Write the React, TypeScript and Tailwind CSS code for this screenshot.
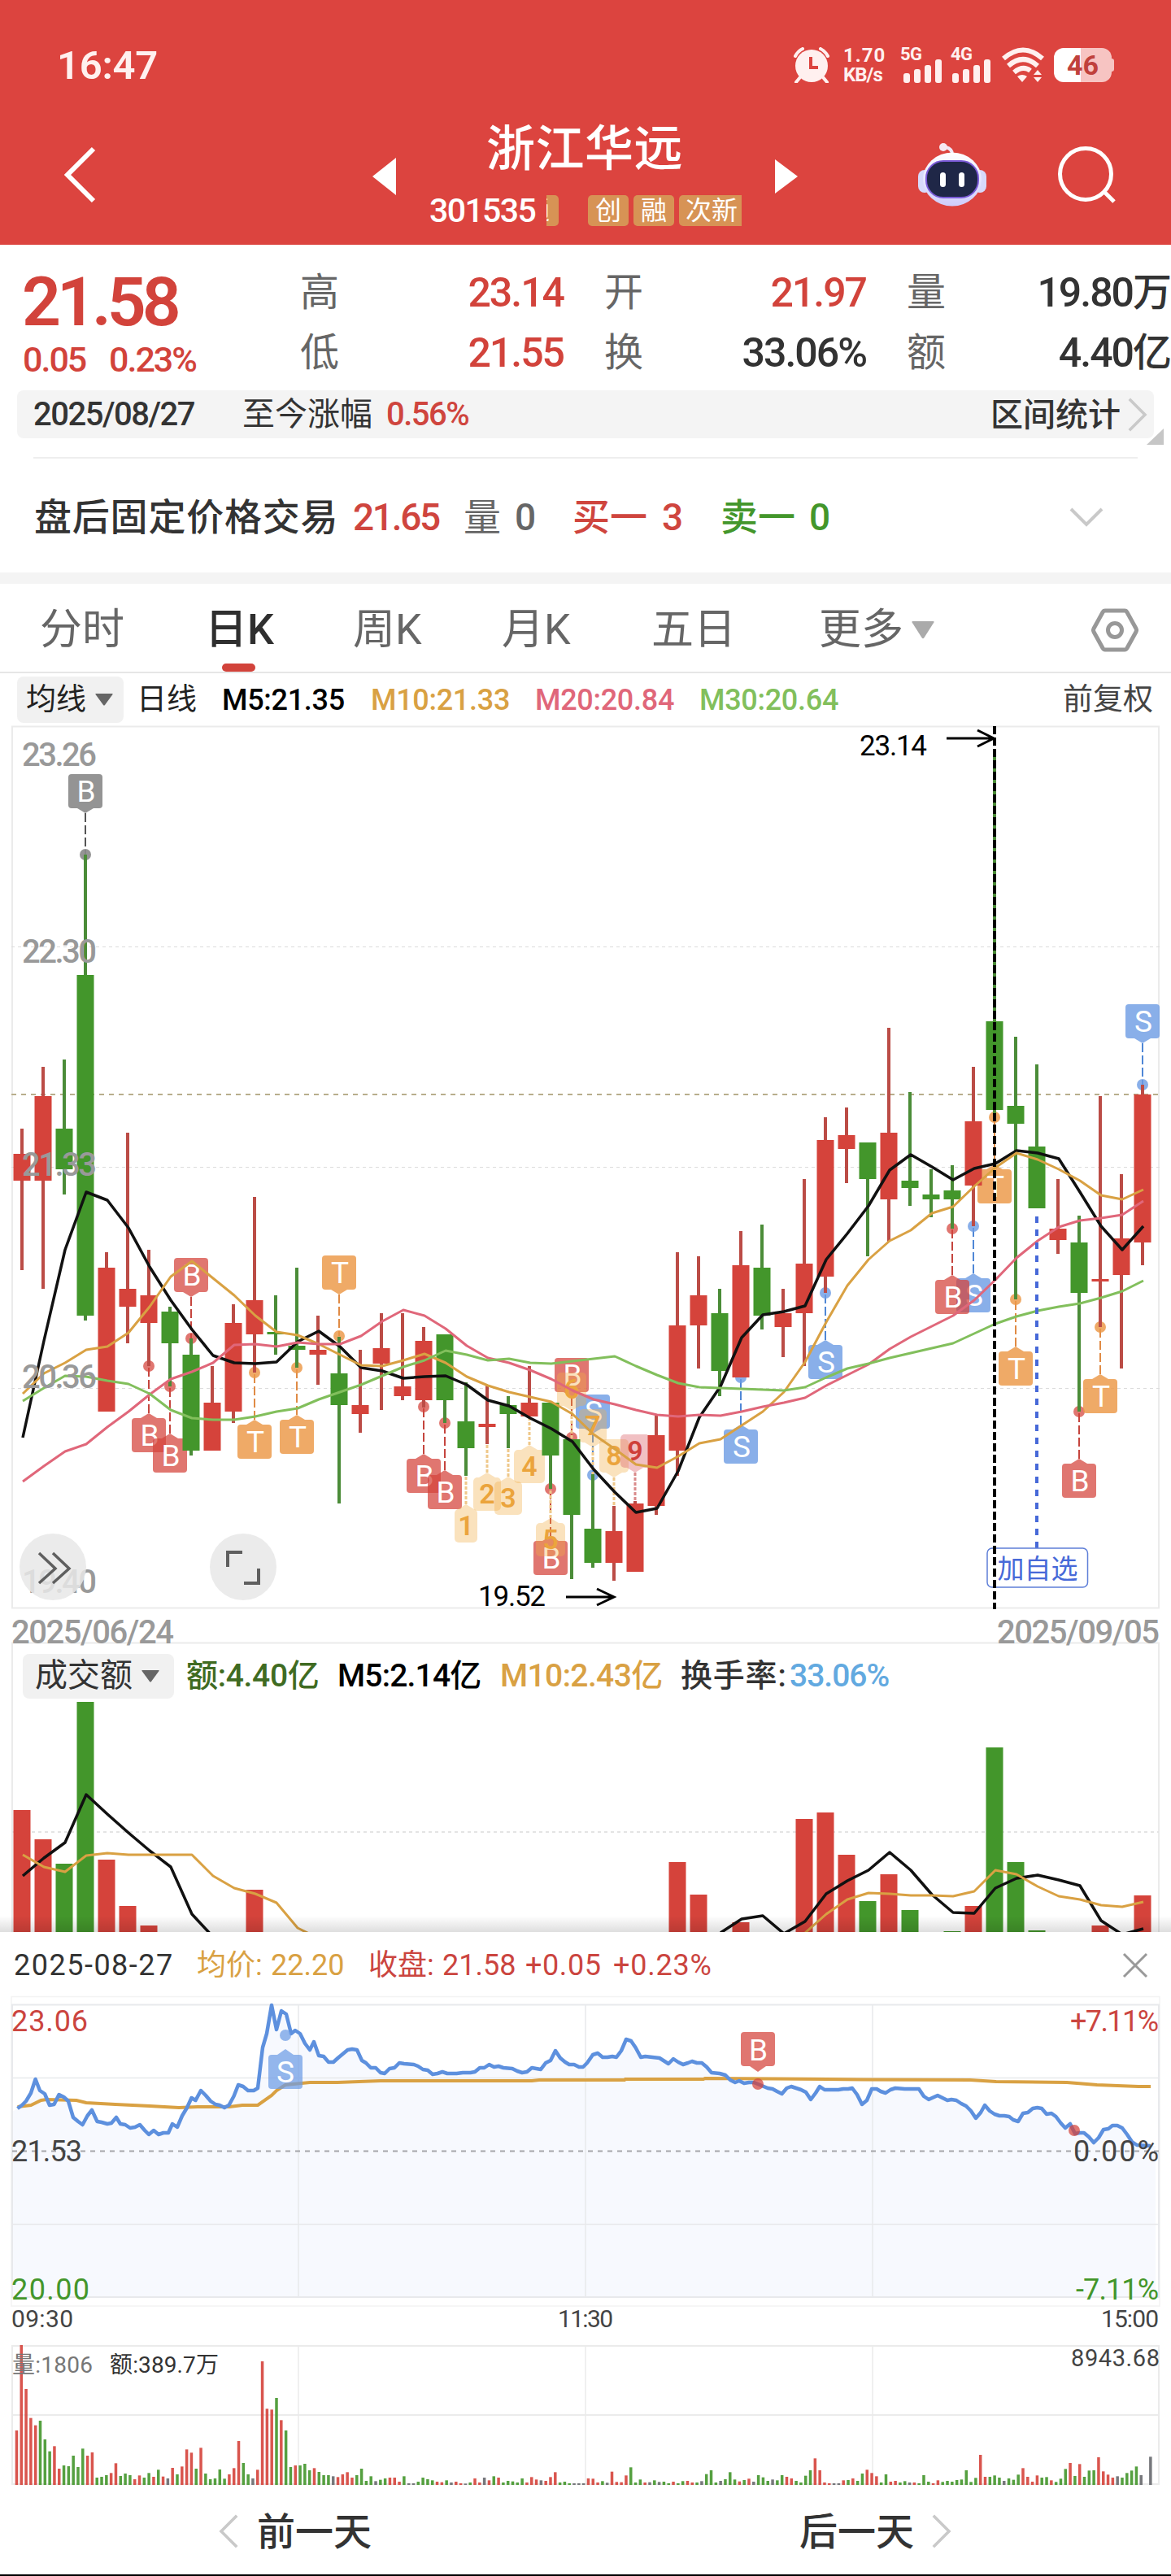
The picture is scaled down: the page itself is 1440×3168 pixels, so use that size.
import type { ReactNode } from 'react'

type Tone = 'r' | 'g' | 'k'
type Point = [number, number]
// [tone, high, bodyTop, bodyBottom, low]
type Candle = [Tone, number, number, number, number]

interface Flag {
  i: number
  label: string
  kind: 'red' | 'orange' | 'blue' | 'gray'
  top: number
  dot: number
}

interface CountFlag {
  i: number
  label: string
  top: number
  width: number
  from?: number
  down?: boolean
}

const RED = '#d5433b'
const GREEN = '#43962b'
const GOLD = '#d9a143'
const PINK = '#e0677a'
const LIME = '#82bf5c'

const TONES: Record<Tone, string> = { r: RED, g: GREEN, k: '#68696e' }

const CANDLES: Candle[] = [
  ['r', 1388, 1419, 1452, 1562],
  ['r', 1312, 1348, 1452, 1585],
  ['g', 1303, 1388, 1438, 1469],
  ['g', 1051, 1199, 1618, 1624],
  ['r', 1540, 1559, 1736, 1736],
  ['r', 1393, 1585, 1607, 1652],
  ['r', 1537, 1593, 1627, 1680],
  ['g', 1607, 1613, 1652, 1705],
  ['g', 1646, 1666, 1784, 1790],
  ['r', 1680, 1725, 1784, 1784],
  ['r', 1604, 1627, 1736, 1750],
  ['r', 1472, 1599, 1641, 1688],
  ['g', 1593, 1638, 1641, 1666],
  ['g', 1559, 1655, 1660, 1682],
  ['r', 1618, 1660, 1666, 1703],
  ['g', 1644, 1689, 1728, 1849],
  ['r', 1660, 1728, 1739, 1762],
  ['r', 1615, 1658, 1677, 1734],
  ['r', 1615, 1705, 1717, 1722],
  ['r', 1632, 1649, 1722, 1731],
  ['g', 1641, 1641, 1722, 1750],
  ['g', 1700, 1748, 1781, 1815],
  ['r', 1704, 1751, 1755, 1776],
  ['g', 1717, 1728, 1739, 1781],
  ['r', 1680, 1725, 1742, 1742],
  ['g', 1725, 1725, 1790, 1831],
  ['g', 1770, 1770, 1863, 1942],
  ['g', 1813, 1880, 1922, 1928],
  ['r', 1852, 1883, 1922, 1944],
  ['r', 1846, 1849, 1933, 1933],
  ['r', 1740, 1765, 1852, 1863],
  ['r', 1540, 1630, 1784, 1815],
  ['r', 1545, 1593, 1630, 1683],
  ['g', 1585, 1615, 1686, 1717],
  ['r', 1514, 1556, 1694, 1694],
  ['g', 1506, 1559, 1618, 1635],
  ['r', 1585, 1615, 1632, 1669],
  ['r', 1450, 1554, 1615, 1680],
  ['r', 1374, 1402, 1570, 1590],
  ['r', 1362, 1396, 1413, 1455],
  ['g', 1405, 1405, 1450, 1545],
  ['r', 1264, 1393, 1475, 1527],
  ['g', 1343, 1452, 1461, 1483],
  ['g', 1438, 1469, 1475, 1497],
  ['g', 1433, 1464, 1475, 1511],
  ['r', 1312, 1379, 1458, 1508],
  ['g', 926, 1256, 1365, 1371],
  ['g', 1275, 1360, 1382, 1598],
  ['g', 1309, 1410, 1486, 1486],
  ['r', 1450, 1511, 1525, 1542],
  ['g', 1495, 1528, 1590, 1736],
  ['r', 1348, 1573, 1576, 1632],
  ['r', 1444, 1523, 1568, 1683],
  ['r', 1334, 1346, 1528, 1556],
]

const MA5 = [
  1768, 1649, 1537, 1466, 1476, 1510, 1558, 1599, 1635, 1667, 1676, 1677, 1675, 1650, 1637, 1656,
  1682, 1686, 1695, 1693, 1692, 1703, 1722, 1729, 1744, 1757, 1773, 1807, 1835, 1860, 1855, 1809,
  1743, 1705, 1645, 1617, 1613, 1606, 1549, 1517, 1483, 1439, 1420, 1435, 1451, 1437, 1431, 1415,
  1418, 1425, 1466, 1508, 1537, 1508,
]
const MA10 = [
  1714, 1689, 1676, 1660, 1656, 1639, 1607, 1570, 1551, 1572, 1593, 1618, 1638, 1642, 1653, 1666,
  1679, 1680, 1673, 1665, 1676, 1693, 1704, 1712, 1718, 1724, 1739, 1764, 1782, 1801, 1805, 1791,
  1775, 1770, 1753, 1736, 1712, 1675, 1626, 1581, 1549, 1526, 1513, 1492, 1484, 1459, 1436, 1418,
  1426, 1438, 1452, 1470, 1475, 1463,
]
const MA20 = [
  1822, 1803, 1785, 1776, 1755, 1736, 1715, 1696, 1687, 1676, 1654, 1653, 1656, 1651, 1653, 1653,
  1643, 1625, 1611, 1618, 1634, 1655, 1670, 1676, 1685, 1696, 1710, 1721, 1727, 1734, 1740, 1742,
  1740, 1741, 1736, 1730, 1725, 1719, 1704, 1691, 1678, 1659, 1644, 1631, 1618, 1599, 1574, 1547,
  1526, 1509, 1501, 1498, 1494, 1477,
]
const MA30 = [
  1723, 1707, 1692, 1693, 1698, 1702, 1714, 1734, 1744, 1746, 1746, 1742, 1736, 1732, 1721, 1712,
  1703, 1692, 1681, 1673, 1661, 1666, 1673, 1671, 1676, 1677, 1674, 1671, 1668, 1680, 1691, 1701,
  1706, 1707, 1708, 1709, 1710, 1706, 1694, 1683, 1677, 1670, 1664, 1658, 1652, 1640, 1628, 1619,
  1612, 1607, 1603, 1596, 1588, 1575,
]

const FLAGS: Flag[] = [
  { i: 3, label: 'B', kind: 'gray', top: 952, dot: 1051 },
  { i: 6, label: 'B', kind: 'red', top: 1744, dot: 1680 },
  { i: 7, label: 'B', kind: 'red', top: 1769, dot: 1705 },
  { i: 8, label: 'B', kind: 'red', top: 1547, dot: 1646 },
  { i: 11, label: 'T', kind: 'orange', top: 1752, dot: 1688 },
  { i: 13, label: 'T', kind: 'orange', top: 1746, dot: 1682 },
  { i: 15, label: 'T', kind: 'orange', top: 1544, dot: 1643 },
  { i: 19, label: 'B', kind: 'red', top: 1794, dot: 1730 },
  { i: 20, label: 'B', kind: 'red', top: 1814, dot: 1750 },
  { i: 25, label: 'B', kind: 'red', top: 1895, dot: 1831 },
  { i: 26, label: 'B', kind: 'red', top: 1670, dot: 1768 },
  { i: 27, label: 'S', kind: 'blue', top: 1715, dot: 1814 },
  { i: 34, label: 'S', kind: 'blue', top: 1758, dot: 1694 },
  { i: 38, label: 'S', kind: 'blue', top: 1654, dot: 1590 },
  { i: 45, label: 'S', kind: 'blue', top: 1572, dot: 1508 },
  { i: 44, label: 'B', kind: 'red', top: 1574, dot: 1511 },
  { i: 46, label: 'T', kind: 'orange', top: 1438, dot: 1374 },
  { i: 47, label: 'T', kind: 'orange', top: 1662, dot: 1598 },
  { i: 50, label: 'B', kind: 'red', top: 1800, dot: 1736 },
  { i: 51, label: 'T', kind: 'orange', top: 1696, dot: 1632 },
  { i: 53, label: 'S', kind: 'blue', top: 1235, dot: 1334 },
]

const COUNTS: CountFlag[] = [
  { i: 21, label: '1', top: 1856, width: 28, from: 1815 },
  { i: 22, label: '2', top: 1817, width: 34, from: 1776 },
  { i: 23, label: '3', top: 1822, width: 34, from: 1781 },
  { i: 24, label: '4', top: 1783, width: 38, from: 1742 },
  { i: 25, label: '5', top: 1873, width: 36, from: 1831 },
  { i: 26, label: '6', top: 1688, width: 36, from: 1770, down: true },
  { i: 27, label: '7', top: 1733, width: 34, from: 1813, down: true },
  { i: 28, label: '8', top: 1770, width: 36, from: 1852, down: true },
  { i: 29, label: '9', top: 1764, width: 36, from: 1846, down: true },
]

const AMOUNTS: [number, number, Tone][] = [
  [0, 2226, 'r'], [1, 2262, 'r'], [2, 2292, 'g'], [3, 2093, 'g'], [4, 2287, 'r'], [5, 2344, 'r'],
  [6, 2368, 'r'], [11, 2324, 'r'], [31, 2290, 'r'], [32, 2330, 'r'], [34, 2364, 'r'],
  [37, 2237, 'r'], [38, 2229, 'r'], [39, 2281, 'r'], [40, 2338, 'g'], [41, 2305, 'r'],
  [42, 2349, 'g'], [44, 2375, 'g'], [45, 2344, 'r'], [46, 2149, 'g'], [47, 2290, 'g'],
  [48, 2374, 'g'], [51, 2368, 'r'], [53, 2331, 'r'],
]
const AMOUNT_MA5_LEFT = [2307, 2285, 2266, 2207, 2231, 2254, 2276, 2296, 2354, 2382]
const AMOUNT_MA5_RIGHT = [
  2377, 2360, 2356, 2378, 2363, 2329, 2313, 2300, 2278, 2300, 2330, 2352, 2353, 2322, 2310, 2306,
  2312, 2319, 2362, 2379, 2372,
]
const AMOUNT_MA10_LEFT = [
  2281, 2296, 2302, 2282, 2279, 2281, 2281, 2281, 2281, 2307, 2322, 2329, 2340, 2371, 2384,
]
const AMOUNT_MA10_RIGHT = [
  2377, 2354, 2336, 2328, 2329, 2331, 2331, 2332, 2326, 2300, 2305, 2320, 2332, 2336, 2343, 2345,
  2339,
]

const MINUTE_PRICE =
  '21.5,2593 27,2589 32,2584 38,2574 43.6,2557 49,2571 55,2575 61,2589 66.5,2588 72.5,2576 78.5,2579 84,2584 90,2604 96,2609 101.5,2613 107.5,2602 113,2595 119.5,2609 125,2610 132,2612 137,2611 143,2604 148,2612 154,2613 160,2617 166,2616 172,2613 178,2620 183,2625 189,2620 195,2625 201,2623 207,2623 212,2612 218,2616 224,2602 230,2592 235.5,2580 240.5,2583 247,2571 253,2577 259,2584 265,2588 270,2589 276,2592 281.5,2589 287.5,2578 293,2564 299,2566 305,2571 312,2571 317,2568 323,2518 328,2501 334,2466 340,2496 346,2473 352,2477 358,2501 363,2497 369,2501 375,2513 381,2521 386,2511 392,2528 398,2529 404,2536 410,2536 415.5,2531 427.5,2521 433,2520 439,2521 445,2534 450,2537 456,2543 462,2543 468,2549 473,2550 479,2544 485,2543 491,2537 497,2538 509,2539 514,2541 520,2545 526,2546 532,2551 538,2550 544,2548 550,2550 561.5,2550 569,2549 578.5,2549 584,2548 590,2543 595.5,2543 601.5,2539 607.5,2542 613,2541 619,2543 630,2544 636,2547 642,2549 648,2548 654,2543 665,2545 671,2537 677,2534 683,2522 689,2531 695,2536 700,2539 706,2539 712,2542 717,2542 722,2537 729,2527 735,2525 741,2530 747,2530 753,2529 758,2530 764,2522 770,2508 776,2510 781.5,2518 788,2530 793.5,2529 811,2531 822,2538 828,2532 834,2536 840,2539 846,2537 851,2535 857,2537 863,2537 869,2542 875,2549 885,2550 892,2552 898,2558 904,2561 909,2559 915,2562 921,2561 927,2561 932,2563 944,2568 950,2569 955.5,2572 961.5,2575 967.5,2568 973,2566 979,2568 985,2570 991,2573 997,2582 1003,2574 1008,2566 1014,2570 1031,2570 1037,2569 1043,2569 1048,2568 1054,2576 1060,2588 1066,2583 1072,2569 1078,2569 1083,2572 1089,2574 1095,2570 1101,2568 1112.5,2569 1124,2569 1130,2569 1136,2578 1142,2582 1153,2577 1165,2583 1170,2582 1176,2583 1182,2587 1188,2590 1194,2596 1200,2605 1206,2598 1211,2589 1217,2596 1223,2600 1229,2602 1235,2602 1241,2603 1246,2607 1252,2609 1258,2599 1264,2598 1270,2593 1275.5,2592 1281,2593 1287,2600 1293,2599 1298.5,2603 1304.5,2611 1310,2617 1316,2612 1322,2624 1328,2623 1333,2623 1339,2628 1345,2635 1351,2629 1357,2619 1363,2618 1368,2614 1374,2614 1380,2617 1386,2625 1392,2634 1398,2638 1415,2639'
const MINUTE_AVERAGE =
  '21.5,2591 38,2589 50.5,2583 57,2582 94,2583 106,2586 142,2588 184,2590 220,2592 243,2591 282,2591 298,2589 317,2589 334,2577 340,2571 351,2564 381,2561 415,2561 468,2559 654,2559 663,2558 768,2558 769,2557 865,2557 867,2556 950,2556.5 1062,2557.5 1193,2558 1225,2560 1312,2561 1349,2564 1400,2566 1415,2566'

// one entry per minute: tone and bar top in thirds of a pixel
const MINUTE_VOLUME =
  'r357 r42 r204 r311 r338 g321 g390 g434 r415 r498 g486 g489 g450 g492 g424 r450 r438 g531 g528 g522 r514 r478 g525 g516 g522 r537 r523 g531 g514 r528 g502 r527 k534 r495 g519 r490 r427 r439 g498 r421 g516 g537 g534 g501 g535 r519 r496 r396 g477 g519 k534 r502 r102 r277 r280 g237 r319 g357 g492 r486 g486 g480 g504 r496 g510 g522 g522 k526 r529 r519 r511 r531 g522 g498 g543 g526 k544 g539 g534 r531 r531 r546 g526 k552 k552 g546 g531 g537 g541 r546 r548 g541 k549 r546 r552 k553 g549 r534 r549 k531 r541 g526 r531 g549 g543 g545 g549 g534 r549 r529 r538 k541 r543 r529 r511 g549 g546 g552 k552 k552 k552 r534 r535 r549 g544 k550 r509 r547 r548 r523 g493 g549 g538 r549 k548 g541 k547 g546 g552 r546 g552 g544 r543 r549 g549 k544 g518 g504 g549 k543 g537 g511 g538 r545 g540 r535 k546 g522 g530 g543 k538 g541 g522 r528 r534 g543 g549 g524 g504 r460 r504 r549 r552 k552 k552 r541 g540 r534 g543 g516 r502 r514 r526 g549 g519 r546 r543 g549 g544 k549 r549 g552 g522 g546 r552 r541 g547 g543 g546 g540 g538 g504 g547 g532 r447 r528 g528 g523 g531 k543 g534 g539 g520 r496 r528 r546 r523 g531 g529 r541 g547 g535 g499 r477 g525 r481 g528 g505 g504 r456 r508 r520 r531 k526 g531 g514 g505 g490 k522 k558 k454'

const QUOTES = [
  { label: '高', value: '23.14', up: true },
  { label: '开', value: '21.97', up: true },
  { label: '量', value: '19.80', unit: '万', up: false },
  { label: '低', value: '21.55', up: true },
  { label: '换', value: '33.06%', up: false },
  { label: '额', value: '4.40', unit: '亿', up: false },
]

const candleX = (i: number) => 27 + 26 * i

function toLine(values: number[], start = 0) {
  return values.map((y, i) => `${candleX(start + i) + 1},${y}`).join(' ')
}

function Caret({ className }: { className: string }) {
  return (
    <svg viewBox="0 0 22 15" preserveAspectRatio="none" className={className}>
      <path d="M1 0h20q1 0 .5 1L12 14q-1 1-2 0L.5 1Q0 0 1 0z" fill="currentColor" />
    </svg>
  )
}

function Chevron({ points, className }: { points: Point[]; className: string }) {
  return (
    <svg viewBox="0 0 40 70" className={className}>
      <polyline points={points.map((p) => p.join(',')).join(' ')} fill="none" stroke="currentColor" strokeWidth="6" />
    </svg>
  )
}

const LEFT: Point[] = [[37, 3], [5, 35], [37, 67]]
const RIGHT: Point[] = [[3, 3], [35, 35], [3, 67]]

function ChartText(props: {
  x: number
  y: number
  size: number
  length?: number
  fill: string
  anchor?: 'start' | 'middle' | 'end'
  weight?: number
  children: ReactNode
}) {
  const { x, y, size, length, fill, anchor = 'start', weight = 400, children } = props
  return (
    <text x={x} y={y} fontSize={size} textLength={length} fill={fill} textAnchor={anchor} fontWeight={weight}>
      {children}
    </text>
  )
}

function SignalBars() {
  return (
    <svg viewBox="0 0 48 30" className="h-[30px] w-[48px]" fill="#fff0ef">
      <rect x="0" y="18" width="8" height="12" rx="3" />
      <rect x="13" y="13" width="8" height="17" rx="3" />
      <rect x="26" y="8" width="8" height="22" rx="3" />
      <rect x="39" y="1" width="8" height="29" rx="3" />
    </svg>
  )
}

function StatusBar() {
  return (
    <div className="mt-[55px] flex h-[50px] items-center justify-between pl-[70px] pr-[70px] text-[#fff0ef]">
      <span className="text-[49px] font-semibold leading-none tracking-[-0.3px]">16:47</span>
      <div className="flex items-center">
        <svg viewBox="0 0 46 44" className="h-[44px] w-[46px]">
          <circle cx="23" cy="23" r="20" fill="#fff0ef" />
          <path d="M3 11Q6 5 12 2M43 11Q40 5 34 2M9 37l-5 6M37 37l5 6" stroke="#fff0ef" strokeWidth="4" fill="none" strokeLinecap="round" />
          <path d="M22 12v13h9" stroke="#dc443f" strokeWidth="4" fill="none" />
        </svg>
        <div className="ml-[16px] w-[56px] text-[24px] font-bold leading-[24px]">
          <div className="tracking-[1px]">1.70</div>
          <div className="tracking-[-1px]">KB/s</div>
        </div>
        <div className="ml-[14px] flex w-[62px] flex-col text-[22px] font-bold">
          <span className="h-[14px] leading-[18px] tracking-[-0.5px]">5G</span>
          <span className="ml-[4px]"><SignalBars /></span>
        </div>
        <div className="flex w-[62px] flex-col text-[22px] font-bold">
          <span className="h-[14px] leading-[18px] tracking-[-0.5px]">4G</span>
          <span className="ml-[2px]"><SignalBars /></span>
        </div>
        <svg viewBox="0 0 54 44" className="h-[44px] w-[54px]" fill="none" stroke="#fff0ef" strokeWidth="6">
          <path d="M3 14Q27-7 51 14" />
          <path d="M9 23Q27 7 45 23" />
          <path d="M16 31Q27 22 36 29" />
          <path d="M20 36q6-4 12 0l-6 7zM40 34l5-6 5 6zM40 37l5 6 5-6z" fill="#fff0ef" stroke="none" />
        </svg>
        <div className="ml-[11px] flex items-center">
          <div className="flex h-[42px] w-[71px] items-center justify-center rounded-[12px] bg-linear-to-r from-white from-46% to-[#f7c4c2] to-46% text-[34px] font-bold leading-none text-[#c0413c]">
            46
          </div>
          <div className="h-[16px] w-[3px] rounded-r bg-[#f7c4c2]" />
        </div>
      </div>
    </div>
  )
}

function Robot() {
  return (
    <svg viewBox="0 0 84 78" className="h-[78px] w-[84px]">
      <defs>
        <linearGradient id="shell" x1="0" y1="0" x2="0" y2="1">
          <stop offset="0" stopColor="#ffffff" />
          <stop offset="1" stopColor="#cfcdfb" />
        </linearGradient>
      </defs>
      <path d="M42 14q0-7-8-9" stroke="#f0e8f6" strokeWidth="4" fill="none" />
      <circle cx="31" cy="5" r="5" fill="#f6e9f2" />
      <rect x="0" y="33" width="16" height="28" rx="8" fill="#d7d9fa" />
      <rect x="68" y="33" width="16" height="28" rx="8" fill="#d7d9fa" />
      <ellipse cx="42" cy="44.500" rx="36" ry="33" fill="url(#shell)" />
      <rect x="10" y="22" width="64" height="45" rx="21" fill="#1f2747" stroke="#7a5ad6" strokeWidth="2" />
      <rect x="27" y="36" width="7" height="18" rx="3.500" fill="#fff" />
      <rect x="50" y="36" width="7" height="18" rx="3.500" fill="#fff" />
    </svg>
  )
}

function Header() {
  return (
    <header className="h-[301px] overflow-hidden bg-[#dc443f]">
      <StatusBar />
      <div className="mt-[40px] flex h-[140px] items-center text-white">
        <Chevron points={LEFT} className="ml-[78px] h-[70px] w-[40px]" />
        <svg viewBox="0 0 30 46" className="ml-[340px] mt-[3px] h-[46px] w-[30px]">
          <path d="M29 0v46L0 23z" fill="#fff" />
        </svg>
        <div className="ml-[40px] flex h-[140px] w-[385px] flex-col">
          <h1 className="ml-[70px] h-[72px] pt-[3px] text-[60px] font-medium leading-[72px] tracking-[0.5px]">浙江华远</h1>
          <div className="mt-[23px] flex h-[38px] items-center text-[32px] leading-[38px]">
            <span className="w-[144px] text-[41px] font-medium tracking-[-1.6px]">301535</span>
            <span className="h-[38px] w-[15px] overflow-hidden rounded-r-[5px] bg-[#d79355]">
              <span className="-ml-[28px] block w-[32px]">通</span>
            </span>
            <span className="ml-[36px] w-[50px] rounded-[5px] bg-[#d79355] text-center">创</span>
            <span className="ml-[6px] w-[50px] rounded-[5px] bg-[#d79355] text-center">融</span>
            <span className="ml-[6px] w-[77px] rounded-l-[5px] bg-[#d79355] pl-[8px]">次新</span>
          </div>
        </div>
        <svg viewBox="0 0 28 42" className="ml-[40px] mt-[4px] h-[42px] w-[28px]">
          <path d="M0 0v42L28 21z" fill="#fff" />
        </svg>
        <div className="ml-[148px]"><Robot /></div>
        <svg viewBox="0 0 72 72" className="ml-[88px] h-[72px] w-[72px]" fill="none" stroke="#fff" strokeWidth="5">
          <circle cx="34" cy="35" r="31.500" />
          <path d="M57 57l12 12" />
        </svg>
      </div>
    </header>
  )
}

function QuotePanel() {
  return (
    <section className="h-[403px] text-[#333]">
      <div className="flex h-[179px] pt-[22px]">
        <div className="w-[369px] pl-[27px] text-[#d2433b]">
          <div className="mt-[8px] h-[82px] text-[84px] font-semibold leading-[82px] tracking-[-5px]">21.58</div>
          <div className="mt-[7px] flex text-[43px] font-medium leading-[44px] tracking-[-2px]">
            <span className="ml-[1px] w-[106px]">0.05</span>
            <span>0.23%</span>
          </div>
        </div>
        <div className="grid grid-cols-[324px_322px_324px] grid-rows-[74px_74px] gap-x-[50px]">
          {QUOTES.map((quote) => (
            <div key={quote.label} className="flex items-center justify-between text-[48px]">
              <span className="text-[#666]">{quote.label}</span>
              <span
                className={
                  quote.up
                    ? 'text-[50px] font-medium tracking-[-2px] text-[#d2433b]'
                    : 'flex items-center text-[50px] font-medium tracking-[-2px] text-[#333]'
                }
              >
                {quote.value}
                {quote.unit ? <span className="text-[48px]">{quote.unit}</span> : null}
              </span>
            </div>
          ))}
        </div>
      </div>

      <div className="relative mx-[21px] flex h-[59px] items-center rounded-[8px] bg-[#f4f4f4] pl-[20px] text-[40px] leading-none">
        <span className="w-[257px] font-medium tracking-[-1.500px]">2025/08/27</span>
        <span className="w-[177px]">至今涨幅</span>
        <span className="font-medium tracking-[-1.500px] text-[#cf453e]">0.56%</span>
        <span className="ml-auto pt-[2px] font-medium">区间统计</span>
        <Chevron points={RIGHT} className="ml-[9px] mr-[8px] h-[42px] w-[24px] text-[#c9c9c9]" />
        <svg viewBox="0 0 21 20" className="absolute -bottom-[8px] -right-[12px] h-[20px] w-[21px]">
          <path d="M21 0v20H0z" fill="#c6c6c6" />
        </svg>
      </div>

      <div className="mx-[41px] mt-[23px] border-t-2 border-[#eeeeee]" />

      <div className="flex h-[139px] items-center pl-[42px] pt-[5px] text-[46px] font-medium leading-none">
        <span className="w-[392px] tracking-[0.8px]">盘后固定价格交易</span>
        <span className="w-[136px] tracking-[-2.300px] text-[#cf453e]">21.65</span>
        <span className="w-[63px] font-normal text-[#666]">量</span>
        <span className="w-[71px] text-[#666]">0</span>
        <span className="w-[110px] text-[#cf453e]">买一</span>
        <span className="w-[72px] text-[#cf453e]">3</span>
        <span className="w-[109px] text-[#43962b]">卖一</span>
        <span className="text-[#43962b]">0</span>
        <svg viewBox="0 0 42 26" className="ml-auto mr-[83px] h-[26px] w-[42px]">
          <path d="M2 3l19 19L40 3" fill="none" stroke="#c9c9c9" strokeWidth="4" />
        </svg>
      </div>
    </section>
  )
}

function Tabs() {
  return (
    <nav className="h-[124px] border-t-[14px] border-[#f4f4f4]">
      <div className="flex h-[110px] items-center border-b-2 border-[#e6e6e6] pl-[49px] pt-[5px] text-[52px] leading-none text-[#666]">
        <span className="w-[203px]">分时</span>
        <span className="relative w-[182px] font-medium text-[#2f2f2f]">
          日K
          <span className="absolute -bottom-[25px] left-[21px] h-[10px] w-[41px] rounded-full bg-[#d2433b]" />
        </span>
        <span className="w-[183px]">周K</span>
        <span className="w-[184px]">月K</span>
        <span className="w-[206px]">五日</span>
        <span>更多</span>
        <Caret className="ml-[10px] h-[22px] w-[28px] text-[#aaa]" />
        <svg viewBox="0 0 58 54" className="ml-auto mr-[40px] h-[54px] w-[58px]" fill="none" stroke="#989898" strokeWidth="5">
          <path d="M17 3h24q2 0 3 2l11 20q1 2 0 4L44 49q-1 2-3 2H17q-2 0-3-2L3 29q-1-2 0-4L14 5q1-2 3-2z" />
          <circle cx="29" cy="27" r="8.500" />
        </svg>
      </div>
    </nav>
  )
}

function AverageRow() {
  return (
    <div className="flex h-[62px] items-center pl-[21px] pt-[3px] text-[36px] leading-none text-[#222]">
      <button type="button" className="flex h-[57px] w-[131px] items-center rounded-[8px] bg-[#f1f1f1] pl-[11px] text-[37px]">
        均线
        <Caret className="ml-[11px] h-[15px] w-[22px] text-[#666]" />
      </button>
      <span className="ml-[16px] w-[105px] text-[37px]">日线</span>
      <span className="w-[183px] font-medium tracking-[-0.3px] text-black">M5:21.35</span>
      <span className="w-[202px] font-medium tracking-[-0.3px] text-[#d9a143]">M10:21.33</span>
      <span className="w-[202px] font-medium tracking-[-0.3px] text-[#e0677a]">M20:20.84</span>
      <span className="font-medium tracking-[-0.3px] text-[#82bf5c]">M30:20.64</span>
      <span className="ml-auto mr-[22px] text-[37px] text-[#444]">前复权</span>
    </div>
  )
}

const FLAG_COLORS = {
  red: { box: RED, opacity: 0.73, line: '#c5453e' },
  orange: { box: '#ec9746', opacity: 0.82, line: '#e08b45' },
  blue: { box: '#6c9be4', opacity: 0.8, line: '#4f87d6' },
  gray: { box: '#8b8b8b', opacity: 0.92, line: '#555' },
}

function KFlag({ i, label, kind, top, dot }: Flag) {
  const x = candleX(i)
  const { box, opacity, line } = FLAG_COLORS[kind]
  const above = top < dot
  const tip = above ? top + 48 : top - 6
  const base = above ? top + 42 : top

  return (
    <g>
      <line x1={x} x2={x} y1={tip} y2={dot} stroke={line} strokeWidth="2" strokeDasharray="11 4" />
      <g fill={box} fillOpacity={opacity}>
        <circle cx={x} cy={dot} r="7" />
        <rect x={x - 21} y={top} width="42" height="42" rx="4" />
        <path d={`M${x - 10} ${base}H${x + 10}L${x} ${tip}z`} />
      </g>
      <ChartText x={x + 1} y={top + 34} size={37} fill="#fff" anchor="middle">
        {label}
      </ChartText>
    </g>
  )
}

function KCount({ i, label, top, width, from, down }: CountFlag) {
  const x = candleX(i)
  const last = label === '9'
  const base = down ? top + 41 : top
  const tip = down ? top + 47 : top - 6

  return (
    <g>
      <line x1={x} x2={x} y1={tip} y2={from} stroke={last ? '#d98a8a' : '#efc88a'} strokeWidth="3" strokeDasharray="4 2" />
      <g fill={last ? '#dd6a70' : '#f2ae48'} fillOpacity={last ? 0.42 : 0.36}>
        <rect x={x - width / 2} y={top} width={width} height="41" rx="5" />
        <path d={`M${x - 10} ${base}H${x + 10}L${x} ${tip}z`} />
      </g>
      <ChartText x={x} y={top + 32} size={34} weight={600} fill={last ? '#cf3f3a' : '#eba43c'} anchor="middle">
        {label}
      </ChartText>
    </g>
  )
}

function KChart() {
  return (
    <svg viewBox="0 890 1440 1140" className="block h-[1140px] w-[1440px]">
      <path d="M15 1977.500V893.500H1425V1977.500zM15 2030V2020.500H1425V2030" fill="none" stroke="#ebebeb" strokeWidth="2" />
      <g stroke="#dcdcdc" strokeDasharray="4 4">
        <line x1="14" x2="1426" y1="1164.500" y2="1164.500" />
        <line x1="14" x2="1426" y1="1435.500" y2="1435.500" />
        <line x1="14" x2="1426" y1="1707.500" y2="1707.500" />
      </g>
      <line x1="14" x2="1426" y1="1346" y2="1346" stroke="#b8ae8c" strokeWidth="2" strokeDasharray="6 6" />

      {FLAGS.map((flag) => (
        <KFlag key={flag.i} {...flag} />
      ))}
      {COUNTS.map((count) => (
        <KCount key={count.i} {...count} />
      ))}

      {CANDLES.map(([tone, high, top, bottom, low], i) => (
        <g key={i} fill={TONES[tone]}>
          <rect x={candleX(i) - 2} y={high} width="4" height={low - high} fill={tone === 'r' ? '#bb4c46' : '#4b8c38'} />
          <rect x={candleX(i) - 10.5} y={top} width="21" height={bottom - top} />
        </g>
      ))}

      <g fill="none" strokeWidth="3" strokeLinejoin="round">
        <polyline points={toLine(MA5)} stroke="#111" strokeWidth="3.500" />
        <polyline points={toLine(MA10)} stroke={GOLD} />
        <polyline points={toLine(MA20)} stroke={PINK} />
        <polyline points={toLine(MA30)} stroke={LIME} />
      </g>

      <line x1="1275" x2="1275" y1="1496" y2="1904" stroke="#4769d8" strokeWidth="4" strokeDasharray="8 8" />
      <rect x="1214" y="1904" width="123.500" height="48" rx="6" fill="none" stroke="#5f7fd8" strokeWidth="1.500" />
      <ChartText x={1276} y={1941} size={33} fill="#4769d8" anchor="middle">加自选</ChartText>
      <line x1="1223" x2="1223" y1="893" y2="1979" stroke="#000" strokeWidth="4" strokeDasharray="10 4" />

      <g fill="none" stroke="#000" strokeWidth="3">
        <path d="M1164 908H1222M1202 898L1222 908L1202 918" />
        <path d="M696 1964H755M734 1954L755 1964L734 1974" />
      </g>
      <ChartText x={1057} y={929} size={35} length={83} fill="#000">23.14</ChartText>
      <ChartText x={588} y={1975} size={35} length={83} fill="#000">19.52</ChartText>

      <ChartText x={27} y={942} size={40} length={92} fill="#999" weight={500}>23.26</ChartText>
      <ChartText x={27} y={1184} size={40} length={92} fill="#999" weight={500}>22.30</ChartText>
      <ChartText x={27} y={1446} size={40} length={92} fill="#999" weight={500}>21.33</ChartText>
      <ChartText x={27} y={1707} size={40} length={92} fill="#999" weight={500}>20.36</ChartText>
      <ChartText x={27} y={1959} size={40} length={92} fill="#999" weight={500}>19.40</ChartText>

      <g fill="#e8e8e8" fillOpacity="0.85">
        <circle cx="65" cy="1927" r="41" />
        <circle cx="299" cy="1927" r="41" />
      </g>
      <g fill="none" stroke="#5f5f5f" strokeWidth="3.500">
        <path d="M48 1910L68 1929L48 1947M65 1910L85 1929L65 1947" />
        <path d="M298 1909H280V1927M300 1947H318V1929" strokeWidth="4" />
      </g>

      <ChartText x={14} y={2021} size={40} length={200} fill="#999" weight={500}>2025/06/24</ChartText>
      <ChartText x={1226} y={2021} size={40} length={200} fill="#999" weight={500}>2025/09/05</ChartText>
    </svg>
  )
}

function AmountPanel() {
  return (
    <section>
      <div className="mx-[14px] flex h-[60px] items-center border-x-2 border-[#ebebeb] pl-[12px] pt-[2px] text-[39px] leading-none">
        <button type="button" className="flex h-[55px] w-[186px] items-center rounded-[8px] bg-[#f1f1f1] pl-[15px] text-[40px] text-[#333]">
          成交额
          <Caret className="ml-[11px] h-[15px] w-[22px] text-[#666]" />
        </button>
        <span className="ml-[15px] w-[186px] font-medium tracking-[-0.3px] text-[#3f6b22]">额:4.40亿</span>
        <span className="w-[200px] font-medium tracking-[-0.8px] text-black">M5:2.14亿</span>
        <span className="w-[222px] font-medium tracking-[-0.6px] text-[#d9a143]">M10:2.43亿</span>
        <span className="w-[134px] font-medium tracking-[0.8px] text-[#333]">换手率:</span>
        <span className="font-medium tracking-[-1px] text-[#62a9e0]">33.06%</span>
      </div>
      <svg viewBox="0 2090 1440 286" className="block h-[286px] w-[1440px]">
        <defs>
          <linearGradient id="shade" x1="0" y1="0" x2="0" y2="1">
            <stop offset="0" stopColor="#000" stopOpacity="0" />
            <stop offset="1" stopColor="#000" stopOpacity="0.13" />
          </linearGradient>
        </defs>
        <path d="M15 2090V2376M1425 2090V2376" stroke="#ebebeb" strokeWidth="2" />
        <line x1="15" x2="1425" y1="2253" y2="2253" stroke="#e4e4e4" strokeWidth="2" strokeDasharray="4 4" />
        {AMOUNTS.map(([i, top, tone]) => (
          <rect key={i} x={candleX(i) - 10.5} y={top} width="21" height={2376 - top} fill={TONES[tone]} />
        ))}
        <g fill="none" strokeWidth="3" strokeLinejoin="round">
          <polyline points={toLine(AMOUNT_MA5_LEFT)} stroke="#111" strokeWidth="3.500" />
          <polyline points={toLine(AMOUNT_MA5_RIGHT, 33)} stroke="#111" strokeWidth="3.500" />
          <polyline points={toLine(AMOUNT_MA10_LEFT)} stroke={GOLD} />
          <polyline points={toLine(AMOUNT_MA10_RIGHT, 37)} stroke={GOLD} />
        </g>
        <rect x="0" y="2356" width="1440" height="20" fill="url(#shade)" />
      </svg>
    </section>
  )
}

function MinuteChart() {
  return (
    <svg viewBox="0 2450 1440 420" className="block h-[420px] w-[1440px]">
      <path d="M14 2455.500H1426V2836H14z" fill="none" stroke="#f3f3f3" strokeWidth="1.500" />
      <polygon points={`15,2597 ${MINUTE_PRICE} 1421,2639 1421,2825 15,2825`} fill="#f7f9fe" />
      <g fill="none" stroke="#e8e9ec" strokeWidth="1.500">
        <path d="M15 2465.500H1425V2825H15z" strokeWidth="2" />
        <path d="M15 2555.500H1425M15 2735.500H1425M367 2465V2825M720 2465V2825M1073 2465V2825" />
      </g>
      <line x1="15" x2="1425" y1="2645.500" y2="2645.500" stroke="#a5a6aa" strokeWidth="2" strokeDasharray="6 6" />

      <polyline points={MINUTE_AVERAGE} fill="none" stroke={GOLD} strokeWidth="4" />
      <polyline points={MINUTE_PRICE} fill="none" stroke="#5d90de" strokeWidth="4.500" strokeLinejoin="round" />

      <g fill="#6c9be4" fillOpacity="0.72">
        <circle cx="351" cy="2503" r="7" />
        <rect x="330" y="2527" width="42" height="42" rx="4" />
        <path d="M341 2527H361L351 2520z" />
      </g>
      <ChartText x={351} y={2561} size={37} fill="#fff" anchor="middle">S</ChartText>
      <g fill={RED} fillOpacity="0.73">
        <circle cx="932" cy="2563" r="7" />
        <circle cx="1321" cy="2620" r="7" />
        <rect x="911" y="2499" width="42" height="42" rx="4" />
        <path d="M922 2541H942L932 2548z" />
      </g>
      <ChartText x={932.5} y={2534} size={37} fill="#fff" anchor="middle">B</ChartText>

      <ChartText x={14} y={2498} size={36} length={94} fill="#cb453f">23.06</ChartText>
      <ChartText x={14} y={2658} size={36} length={87} fill="#444">21.53</ChartText>
      <ChartText x={14} y={2828} size={36} length={96} fill="#43962b">20.00</ChartText>
      <ChartText x={1425} y={2498} size={36} length={109} fill="#cb453f" anchor="end">+7.11%</ChartText>
      <ChartText x={1425} y={2658} size={36} length={105} fill="#444" anchor="end">0.00%</ChartText>
      <ChartText x={1425} y={2828} size={36} length={102} fill="#43962b" anchor="end">-7.11%</ChartText>

      <ChartText x={14} y={2862} size={30} length={76} fill="#444">09:30</ChartText>
      <ChartText x={720} y={2862} size={30} length={68} fill="#444" anchor="middle">11:30</ChartText>
      <ChartText x={1425} y={2862} size={30} length={71} fill="#444" anchor="end">15:00</ChartText>
    </svg>
  )
}

function MinuteVolume() {
  const bars = MINUTE_VOLUME.split(' ')

  return (
    <svg viewBox="0 2870 1440 190" className="block h-[190px] w-[1440px]">
      <path d="M15 2885H1425V3055H15zM15 2970H1425" fill="none" stroke="#ebebeb" strokeWidth="2" />
      <path d="M367 2885V3055M720 2885V3055M1073 2885V3055" stroke="#ebebeb" strokeWidth="1.500" />
      {bars.map((bar, k) => {
        const top = 2870 + Number(bar.slice(1)) / 3
        return (
          <rect key={k} x={18.7 + 5.81 * k} y={top} width="3.500" height={3056 - top} fill={TONES[bar[0] as Tone]} fillOpacity="0.9" />
        )
      })}
      <ChartText x={15} y={2918} size={28} length={99} fill="#777">量:1806</ChartText>
      <ChartText x={135} y={2918} size={28} length={134} fill="#333">额:389.7万</ChartText>
      <ChartText x={1426} y={2910} size={29} length={109} fill="#444" anchor="end">8943.68</ChartText>
    </svg>
  )
}

function DaySheet() {
  return (
    <section className="h-[792px] border-b-2 border-black bg-white">
      <div className="flex h-[74px] items-center pl-[17px] pt-[8px] text-[36px] leading-none">
        <span className="w-[225px] tracking-[1.500px] text-[#333]">2025-08-27</span>
        <span className="w-[91px] text-[#d9a143]">均价:</span>
        <span className="w-[120px] text-[#d9a143]">22.20</span>
        <span className="w-[91px] text-[#cb453f]">收盘:</span>
        <span className="w-[102px] text-[#cb453f]">21.58</span>
        <span className="w-[108px] tracking-[0.6px] text-[#cb453f]">+0.05</span>
        <span className="tracking-[0.8px] text-[#cb453f]">+0.23%</span>
        <svg viewBox="0 0 32 32" className="ml-auto mr-[28px] h-[32px] w-[32px]">
          <path d="M2 2l28 28M30 2L2 30" stroke="#999" strokeWidth="3" />
        </svg>
      </div>
      <MinuteChart />
      <MinuteVolume />
      <div className="flex h-[106px] items-center text-[47px] font-medium leading-none text-[#333]">
        <Chevron points={LEFT} className="ml-[269px] h-[42px] w-[24px] text-[#c9c9c9]" />
        <span className="ml-[23px] w-[667px]">前一天</span>
        <span>后一天</span>
        <Chevron points={RIGHT} className="ml-[22px] h-[42px] w-[24px] text-[#c9c9c9]" />
      </div>
    </section>
  )
}

export default function App() {
  return (
    <main className="h-[3168px] w-[1440px] overflow-hidden bg-white font-[Roboto,'Noto_Sans_CJK_SC',sans-serif]">
      <Header />
      <QuotePanel />
      <Tabs />
      <AverageRow />
      <KChart />
      <AmountPanel />
      <DaySheet />
    </main>
  )
}
